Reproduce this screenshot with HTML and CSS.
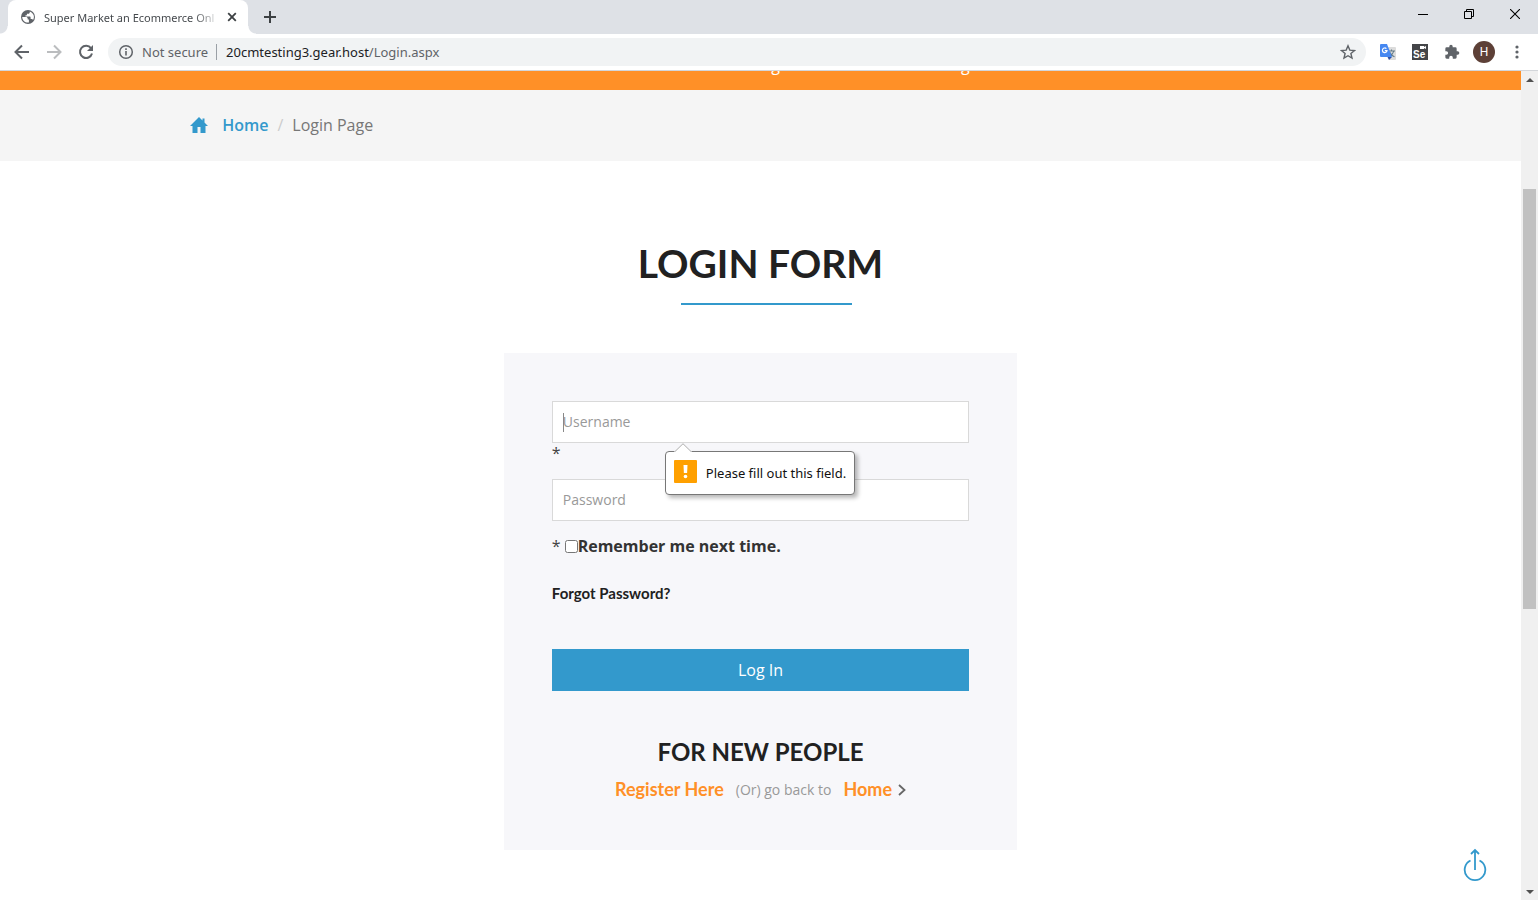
FILE: index.html
```html
<!DOCTYPE html>
<html lang="en">
<head>
<meta charset="utf-8">
<title>Super Market an Ecommerce Online Shopping</title>
<link rel="stylesheet" href="styles.css">
</head>
<body>
<header class="browser">
  <div class="tab-strip">
    <div class="tab">
      <svg width="16" height="16" viewBox="0 0 16 16"><circle cx="8" cy="8" r="7" fill="#5f6368"/><path d="M2.200 8h3.600c1.200 0 1.900.7 1.900 1.700v.9h1.200v2.900c-3.600.6-6.500-2-6.700-5.500zM9.800 2.400v.9c0 .9-.7 1.500-1.500 1.500H6.900v1.500H5.500v1.200h4.100c.6 0 1 .5 1 1v1.600h1.200c.6 0 1 .4 1.200.9 1.900-2.800 1-7-3.200-8.600z" fill="#fff"/></svg>
      <span class="tab-title">Super Market an Ecommerce Onl</span>
      <button class="icon-button tab-close" aria-label="Close tab"><svg width="10" height="10" viewBox="0 0 10 10"><path d="M1.200 1.200l7.600 7.600M8.800 1.200L1.200 8.800" stroke="#3c4043" stroke-width="1.800"/></svg></button>
    </div>
    <button class="icon-button new-tab" aria-label="New tab"><svg width="12" height="12" viewBox="0 0 12 12"><path d="M6 0v12M0 6h12" stroke="#3c4043" stroke-width="2"/></svg></button>
    <div class="window-controls">
      <button class="icon-button" aria-label="Minimize"><svg width="10" height="10" viewBox="0 0 10 10"><path d="M0 5.500h10" stroke="#000"/></svg></button>
      <button class="icon-button" aria-label="Restore"><svg width="10" height="10" viewBox="0 0 10 10"><path d="M.5 2.500h7v7h-7zM2.500 2.500v-2h7v7h-2" fill="none" stroke="#000"/></svg></button>
      <button class="icon-button" aria-label="Close"><svg width="10" height="10" viewBox="0 0 10 10"><path d="M0 0l10 10M10 0L0 10" stroke="#000" stroke-width="1.100"/></svg></button>
    </div>
  </div>
  <div class="toolbar">
    <button class="icon-button nav-button" aria-label="Back"><svg width="16" height="16" viewBox="0 0 16 16"><path d="M15 8H2M8 1.500L1.500 8 8 14.500" fill="none" stroke="#5f6368" stroke-width="2"/></svg></button>
    <button class="icon-button nav-button" aria-label="Forward"><svg width="16" height="16" viewBox="0 0 16 16"><path d="M1 8h13M8 1.500L14.500 8 8 14.500" fill="none" stroke="#bbbdbf" stroke-width="2"/></svg></button>
    <button class="icon-button nav-button" aria-label="Reload"><svg width="16" height="16" viewBox="0 0 16 16"><path d="M13 4.200A6.100 6.100 0 1 0 14 9.500" fill="none" stroke="#5f6368" stroke-width="2"/><path d="M15 1v6H9z" fill="#5f6368"/></svg></button>
    <div class="address">
      <svg width="16" height="16" viewBox="0 0 16 16"><circle cx="8" cy="8" r="6.300" fill="none" stroke="#5f6368" stroke-width="1.500"/><path d="M8 7v4.500M8 4.300v1.600" stroke="#5f6368" stroke-width="1.600"/></svg>
      <span class="security">Not secure</span>
      <span class="url"><span class="host">20cmtesting3.gear.host</span>/Login.aspx</span>
      <button class="icon-button star" aria-label="Bookmark"><svg width="16" height="16" viewBox="0 0 16 16"><path d="M8 1.800l1.800 4.300 4.700.4-3.600 3 1.100 4.600L8 11.700l-4 2.400 1.100-4.600-3.600-3 4.700-.4z" fill="none" stroke="#5f6368" stroke-width="1.400"/></svg></button>
    </div>
    <div class="extensions">
      <svg width="16" height="16" viewBox="0 0 16 16"><path d="M7 3h8a1 1 0 0 1 1 1v11a1 1 0 0 1-1 1H9z" fill="#dcdcdc"/><path d="M8 7h7M11.500 5.500V7M13.800 7c-.7 3-2.500 4.500-4.300 5.500M10 8.500c1 2 2.500 3.500 4.500 4.300" stroke="#607988" stroke-width="1.100" fill="none"/><path d="M1 0h6l5 13H1a1 1 0 0 1-1-1V1a1 1 0 0 1 1-1z" fill="#4688f1"/><path d="M7.500 13H12l-3 3z" fill="#3151a3"/><path d="M6.400 4.700A2.300 2.300 0 1 0 7 6.600H4.800" fill="none" stroke="#fff" stroke-width="1.200"/></svg>
      <svg width="16" height="16" viewBox="0 0 16 16"><path d="M0 0h16v16H0z" fill="#444548"/><path d="M8 2h4v1l2-1v3l-2-1v1H8z" fill="#fff"/><text class="selenium" x="1" y="14">Se</text></svg>
      <svg width="16" height="16" viewBox="0 0 24 24"><path d="M20.500 11H19V7a2 2 0 0 0-2-2h-4V3.500a2.500 2.500 0 0 0-5 0V5H4a2 2 0 0 0-2 2v3.800h1.500a2.700 2.700 0 0 1 0 5.400H2V20a2 2 0 0 0 2 2h3.800v-1.500a2.700 2.700 0 0 1 5.400 0V22H17a2 2 0 0 0 2-2v-4h1.500a2.500 2.500 0 0 0 0-5z" fill="#5f6368"/></svg>
    </div>
    <button class="icon-button avatar" aria-label="Profile">H</button>
    <button class="icon-button menu" aria-label="Menu"><svg width="4" height="14" viewBox="0 0 4 14"><circle cx="2" cy="2" r="1.600" fill="#5f6368"/><circle cx="2" cy="7" r="1.600" fill="#5f6368"/><circle cx="2" cy="12" r="1.600" fill="#5f6368"/></svg></button>
  </div>
</header>
<div class="viewport">
  <div class="page">
    <div class="promo"><span>g</span><span>g</span></div>
    <nav class="breadcrumb-bar" aria-label="Breadcrumb">
      <div class="container breadcrumb">
        <svg width="18" height="18" viewBox="0 0 18 18"><path d="M9 0l3.500 3.500V1.500h2V5.500L18 9h-2.500v7h-5v-6h-3v6h-5V9H0z" fill="#3399cc"/></svg>
        <a class="crumb-home" href="#">Home</a>
        <span class="slash">/</span>
        <span class="crumb-current">Login Page</span>
      </div>
    </nav>
    <main class="container">
      <h1 class="title">LOGIN FORM</h1>
      <div class="title-rule"></div>
      <form class="card">
        <div class="field">
          <input class="text-input" type="text" placeholder="Username" aria-label="Username">
          <span class="caret"></span>
          <div class="bubble" role="alert">
            <svg class="bubble-arrow" width="18" height="9" viewBox="0 0 18 9"><path d="M0 9L9 0l9 9z" fill="#fff"/><path d="M1 8.500L9 .7l8 7.800" fill="none" stroke="#aaa"/></svg>
            <svg width="23" height="23" viewBox="0 0 23 23"><rect width="23" height="23" rx="1" fill="#ffa000"/><path d="M9.500 5h4l-.4 8h-3.200z" fill="#fff"/><circle cx="11.500" cy="16.500" r="1.800" fill="#fff"/></svg>
            <span>Please fill out this field.</span>
          </div>
        </div>
        <div class="required">*</div>
        <input class="text-input" type="password" placeholder="Password" aria-label="Password">
        <div class="remember">
          <span class="asterisk">*</span>
          <input class="checkbox" id="remember" type="checkbox"><label for="remember">Remember me next time.</label>
        </div>
        <a class="forgot" href="#">Forgot Password?</a>
        <button class="login" type="button">Log In</button>
        <h2 class="new-people">FOR NEW PEOPLE</h2>
        <p class="register"><a href="#">Register Here</a><span>(Or) go back to</span><a class="home-link" href="#">Home <svg width="8" height="12" viewBox="0 0 8 12"><path d="M1 1l5.500 5L1 11" fill="none" stroke="#666" stroke-width="1.800"/></svg></a></p>
      </form>
    </main>
    <a class="to-top" href="#" aria-label="Back to top"><svg width="24" height="34" viewBox="0 0 24 34"><path d="M7.500 12.500A10.300 10.300 0 1 0 16.500 12.500M12 22V2M8 6l4-4 4 4" fill="none" stroke="#3399cc" stroke-width="1.800"/></svg></a>
  </div>
  <div class="scrollbar">
    <button class="icon-button scroll-arrow" aria-label="Scroll up"><svg width="8" height="4" viewBox="0 0 8 4"><path d="M0 4l4-4 4 4z" fill="#505050"/></svg></button>
    <div class="track"><div class="thumb"></div></div>
    <button class="icon-button scroll-arrow" aria-label="Scroll down"><svg width="8" height="4" viewBox="0 0 8 4"><path d="M0 0l4 4 4-4z" fill="#505050"/></svg></button>
  </div>
</div>
</body>
</html>
```
FILE: styles.css
```css
* { box-sizing: border-box; }
body {
  margin: 0;
  height: 100vh;
  display: flex;
  flex-direction: column;
  overflow: hidden;
  background: #fff;
  font-family: "Open Sans", sans-serif;
}
svg { display: block; flex: none; }
a { text-decoration: none; }
.icon-button {
  display: flex;
  align-items: center;
  justify-content: center;
  flex: none;
  padding: 0;
  border: 0;
  background: none;
}

/* Browser frame */
.browser { flex: none; border-bottom: 1px solid #d3d6da; font-family: "Noto Sans", sans-serif; }
.tab-strip { display: flex; height: 34px; background: #dee1e6; }
.tab {
  position: relative;
  display: flex;
  align-items: center;
  width: 240px;
  margin-left: 8px;
  padding: 0 10px 0 12px;
  border-radius: 8px 8px 0 0;
  background: #fff;
}
.tab::before,
.tab::after {
  content: "";
  position: absolute;
  bottom: 0;
  width: 8px;
  height: 8px;
}
.tab::before { left: -8px; background: radial-gradient(circle at 0 0, transparent 7px, #fff 8px); }
.tab::after { right: -8px; background: radial-gradient(circle at 100% 0, transparent 7px, #fff 8px); }
.tab-title {
  flex: 1;
  min-width: 0;
  margin: 0 0 0 8px;
  white-space: nowrap;
  font-size: 11px;
  color: #45494d;
  -webkit-mask-image: linear-gradient(to right, #000 150px, transparent 176px);
  mask-image: linear-gradient(to right, #000 150px, transparent 176px);
}
.tab-close { width: 12px; height: 16px; }
.new-tab { width: 28px; margin-left: 8px; }
.window-controls { display: flex; margin-left: auto; }
.window-controls .icon-button { width: 46px; height: 28px; }
.toolbar { display: flex; align-items: center; height: 36px; padding-left: 6px; }
.nav-button { width: 32px; height: 32px; }
.address {
  display: flex;
  align-items: center;
  flex: 1;
  height: 28px;
  margin-left: 6px;
  padding: 0 10px;
  border-radius: 14px;
  background: #f1f3f4;
  font-size: 13px;
  color: #5f6368;
}
.security { margin-left: 8px; padding-right: 8px; border-right: 1px solid #9aa0a6; line-height: 16px; }
.url { margin-left: 9px; }
.host { color: #202124; }
.star { margin-left: auto; }
.extensions { display: flex; gap: 16px; margin-left: 14px; }
.selenium { font: bold 10px "Liberation Sans", sans-serif; fill: #fff; }
.avatar {
  width: 22px;
  height: 22px;
  margin-left: 13px;
  border-radius: 50%;
  background: #5d4037;
  color: #fff;
  font: 12px Roboto, sans-serif;
}
.menu { width: 43px; height: 28px; }

/* Page */
.viewport { display: flex; flex: 1; min-height: 0; }
.page { position: relative; flex: 1; min-width: 0; overflow: hidden; }
.container { width: 75%; margin: 0 auto; }
.promo {
  display: flex;
  justify-content: center;
  gap: 181px;
  height: 19px;
  padding-left: 220px;
  overflow: hidden;
  background: #ff9027;
  color: #fff;
  font-size: 16px;
  line-height: 0;
}
.promo span { margin-top: -6px; }
.breadcrumb-bar { background: #f5f5f5; padding: 22px 0; }
.breadcrumb { display: flex; align-items: center; font-size: 16px; line-height: 27px; }
.crumb-home { margin-left: 14px; font-weight: 600; color: #3399cc; }
.slash { margin: 0 9px; color: #ccc; }
.crumb-current { color: #777; }
.title {
  margin: 80px 0 0;
  text-align: center;
  font: bold 39px/44px Lato, sans-serif;
  color: #212121;
}
.title-rule { width: 15%; height: 2px; margin: 18px 0 48px 43%; background: #3399cc; }
.card { width: 45%; margin: 0 auto; padding: 48px; background: #f7f7fa; }
.field { position: relative; }
.text-input {
  display: block;
  width: 100%;
  height: 42px;
  padding: 0 10px 2px;
  border: 1px solid #d9d9d9;
  border-radius: 0;
  outline: 0;
  background: #fff;
  font: 14px "Open Sans", sans-serif;
}
.text-input::placeholder { color: #999; }
.caret { position: absolute; top: 12px; left: 11px; width: 1px; height: 19px; background: #888; }
.bubble {
  position: absolute;
  z-index: 1;
  top: 50px;
  left: 113px;
  display: flex;
  gap: 9px;
  height: 44px;
  padding: 8px;
  border: 1px solid #777;
  border-radius: 4px;
  background: #fff;
  box-shadow: 3px 3px 4px rgba(0, 0, 0, .28);
  font: 13px/27px "Noto Sans", sans-serif;
  white-space: nowrap;
  color: #111;
}
.bubble-arrow { position: absolute; top: -9px; left: 8px; }
.required { height: 36px; font-size: 16px; line-height: 20px; color: #444; }
.remember { display: flex; align-items: center; margin-top: 12px; font-size: 16px; line-height: 26px; color: #333; }
.remember label { font-weight: bold; }
.asterisk { margin-right: 4px; color: #444; }
.checkbox { width: 13px; height: 13px; margin: 0; }
.forgot { display: block; margin-top: 24px; font: bold 15px/20px Lato, sans-serif; color: #212121; }
.login {
  display: block;
  width: 100%;
  height: 42px;
  margin-top: 46px;
  border: 0;
  background: #3399cc;
  color: #fff;
  font: 16px "Open Sans", sans-serif;
}
.new-people { margin: 46px 0 0; text-align: center; font: bold 24px/30px Lato, sans-serif; color: #212121; }
.register {
  display: flex;
  align-items: center;
  justify-content: center;
  gap: 12px;
  margin: 10px 0 0;
  font-size: 14px;
  line-height: 25px;
  white-space: nowrap;
  color: #999;
}
.register a { font-family: Lato, sans-serif; font-size: 18px; font-weight: bold; color: #ff9027; }
.home-link { display: flex; align-items: center; gap: 6px; }
.to-top { position: absolute; right: 34px; bottom: 18px; }

/* Scrollbar */
.scrollbar { display: flex; flex-direction: column; width: 17px; background: #f0f0f0; }
.scroll-arrow { width: 17px; height: 17px; }
.track { display: flex; flex-direction: column; flex: 1; padding: 101px 2px 0; }
.thumb { flex: 420; background: #c1c1c1; }
.track::after { content: ""; flex: 274; }
```
